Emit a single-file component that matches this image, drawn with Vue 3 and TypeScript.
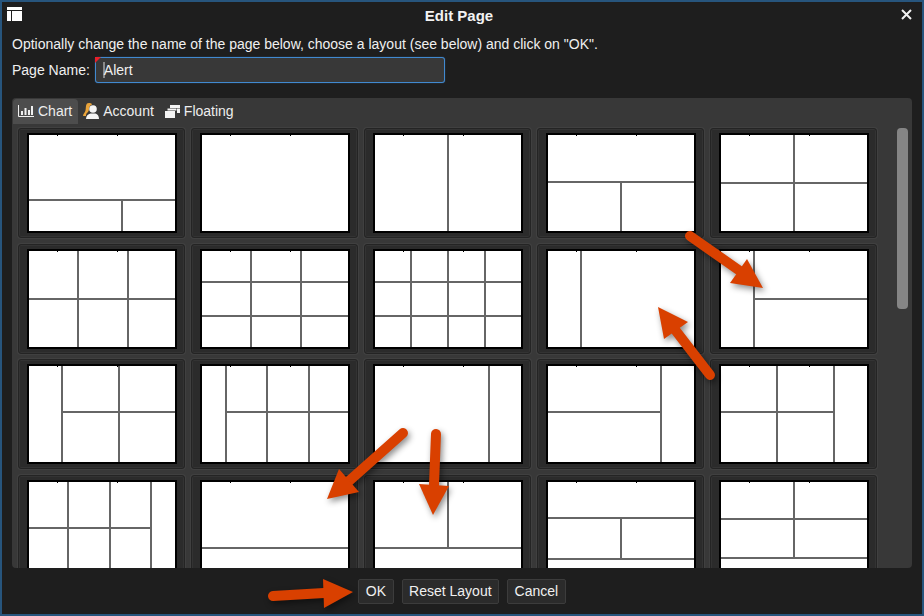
<script setup lang="ts">
type Line = [number, number, number, number]
const W = 150
const H = 100
const v = (x: number, a = 0, b = H + 1): Line => [x, a - 1, x, b - 1]
const h = (y: number, a = 0, b = W): Line => [a, y - 1, b, y - 1]

const layouts: Line[][] = [
  [h(68), v(95, 68)],
  [],
  [v(75)],
  [h(50), v(75, 50)],
  [v(75), h(51)],
  [v(51), v(101), h(51)],
  [v(51), v(101), h(34), h(68)],
  [v(38), v(75), v(112), h(34), h(68)],
  [v(35)],
  [v(35), h(51, 35)],
  [v(35), v(92), h(49, 35)],
  [v(26), v(67), v(109), h(49, 26)],
  [v(116)],
  [v(115), h(49, 0, 115)],
  [v(58), v(115), h(49, 0, 115)],
  [v(41), v(83), v(124), h(49, 0, 124)],
  [h(69)],
  [h(69), v(75, 0, 69)],
  [h(39), h(80), v(75, 39, 80)],
  [h(40), h(79), v(75, 0, 79)]
]

type Arrow = { shaft: string; head: string }
const arrows: Arrow[] = [
  { shaft: '690,236 740,271', head: '747,259 763,288 730,283' },
  { shaft: '710,375 676,331', head: '688,322 658,307 664,339' },
  { shaft: '403,433 349,481', head: '339,469 327,499 359,492' },
  { shaft: '436,434 434,485', head: '419,484 449,486 433,515' },
  { shaft: '273,596 324,593', head: '323,579 353,592 324,608' }
]
</script>

<template>
  <div class="window">
    <header class="titlebar">
      <svg class="app-icon" width="15" height="14" viewBox="0 0 15 14">
        <rect x="0" y="0" width="15" height="3" fill="#fff" />
        <rect x="0" y="4" width="4" height="10" fill="#fff" />
        <rect x="5" y="4" width="10" height="10" fill="#fff" />
      </svg>
      <span class="title">Edit Page</span>
      <svg class="close" width="11" height="11" viewBox="0 0 11 11">
        <path d="M1 1L10 10M10 1L1 10" stroke="#f2f2f2" stroke-width="2" />
      </svg>
    </header>

    <main class="body">
      <p class="intro">Optionally change the name of the page below, choose a layout (see below) and click on "OK".</p>
      <div class="name-row">
        <label class="name-label">Page Name:</label>
        <div class="name-input">
          <span class="caret"></span>
          <span>Alert</span>
          <span class="marker"></span>
        </div>
      </div>

      <section class="panel">
        <nav class="tabs">
          <div class="tab active">
            <svg width="16" height="12" viewBox="0 0 16 12">
              <path d="M0.500 0V11.500H16" fill="none" stroke="#f0f0f0" />
              <path d="M3 6h2v4H3zM6.500 3h2v7h-2zM10 5h2v5h-2zM13 1h2v9h-2z" fill="#f0f0f0" />
            </svg>
            <span>Chart</span>
          </div>
          <div class="tab">
            <svg width="16" height="16" viewBox="0 0 16 16">
              <path d="M4 0.500C6 -0.500 9 0 9 1.500C7 2.500 6 4 6 6C6 8 5 9 3.500 10.500C3 11.500 3 12.500 3 13H0C0 11 2 9.500 2.500 7.500C3 5 2.500 2 4 0.500Z" fill="#e8a33a" />
              <circle cx="10" cy="6" r="3.800" fill="#f4f4f4" />
              <path d="M3 16C3 13 5 11 7.500 10.500H12.500C14.500 11 16 13 16 16Z" fill="#f4f4f4" />
            </svg>
            <span>Account</span>
          </div>
          <div class="tab floating">
            <svg width="15" height="13" viewBox="0 0 15 13">
              <rect x="5" y="0" width="10" height="3" fill="#f4f4f4" />
              <rect x="2.500" y="3.500" width="9" height="2" fill="#f4f4f4" />
              <rect x="0" y="6" width="10" height="7" fill="#f4f4f4" />
              <rect x="12" y="3.500" width="3" height="4.500" fill="#f4f4f4" />
            </svg>
            <span>Floating</span>
          </div>
        </nav>

        <div class="content">
          <div class="grid">
            <div v-for="(lines, i) in layouts" :key="i" class="card">
              <svg class="thumb" :width="W" :height="H" :viewBox="`0 0 ${W} ${H}`">
                <rect x="0" y="0" :width="W" :height="H" fill="#fff" />
                <line
                  v-for="(l, j) in lines"
                  :key="j"
                  :x1="l[0]"
                  :y1="l[1]"
                  :x2="l[2]"
                  :y2="l[3]"
                  stroke="#666"
                  stroke-width="2"
                />
                <rect x="1" y="1" :width="W - 2" :height="H - 2" fill="none" stroke="#000" stroke-width="2" />
                <rect x="30" y="2" width="1" height="1" fill="#000" />
                <rect x="90" y="2" width="1" height="1" fill="#000" />
              </svg>
            </div>
          </div>
          <div class="scrollbar"></div>
        </div>
      </section>
    </main>

    <footer class="footer">
      <button class="btn">OK</button>
      <button class="btn">Reset Layout</button>
      <button class="btn">Cancel</button>
    </footer>

    <svg class="arrows" width="924" height="616" viewBox="0 0 924 616">
      <g v-for="(a, i) in arrows" :key="i">
        <polyline :points="a.shaft" fill="none" stroke="#d94000" stroke-width="10" stroke-linecap="round" />
        <polygon :points="a.head" fill="#d94000" />
      </g>
    </svg>
  </div>
</template>

<style>
html, body { margin: 0; background: #1e1e1e; }
</style>

<style scoped>
.window {
  position: relative;
  box-sizing: border-box;
  width: 924px;
  height: 616px;
  border: 2px solid #27557d;
  background: #1e1e1e;
  color: #f0f0f0;
  font-family: "Liberation Sans", Arial, sans-serif;
  font-size: 14px;
  display: flex;
  flex-direction: column;
  overflow: hidden;
}
.titlebar {
  flex: none;
  height: 26px;
  display: flex;
  align-items: center;
  justify-content: center;
  padding-right: 6px;
  position: relative;
}
.title { font-weight: 700; font-size: 15px; color: #f2f2f2; }
.app-icon { position: absolute; left: 5px; top: 5px; }
.close { position: absolute; right: 10px; top: 7px; }
.body {
  flex: 1;
  min-height: 0;
  display: flex;
  flex-direction: column;
  padding: 0 10px;
}
.intro { margin: 8px 0 0; line-height: 16px; height: 16px; }
.name-row {
  display: flex;
  align-items: center;
  gap: 5px;
  margin-top: 5px;
}
.name-input {
  position: relative;
  box-sizing: border-box;
  width: 350px;
  height: 26px;
  display: flex;
  align-items: center;
  padding-left: 7px;
  background: #383838;
  border: 1px solid #4189cf;
  border-radius: 3px;
  box-shadow: 0 0 1px #3b7fc4;
}
.caret { width: 2px; height: 16px; background: #8a8a8a; margin-right: -1px; }
.marker {
  position: absolute;
  left: -1px;
  top: -1px;
  border-top: 6px solid #e8202a;
  border-right: 6px solid transparent;
}
.panel {
  flex: 1;
  min-height: 0;
  margin-top: 15px;
  background: #383838;
  border-radius: 4px;
  overflow: hidden;
  display: flex;
  flex-direction: column;
}
.tabs {
  flex: none;
  height: 27px;
  display: flex;
  align-items: flex-start;
  padding: 1px 0 0 1px;
  box-sizing: border-box;
}
.tab {
  box-sizing: border-box;
  height: 25px;
  display: flex;
  align-items: center;
  gap: 4px;
  padding: 0 5px 1px;
  border-radius: 4px 4px 0 0;
  color: #eee;
}
.tab.active { background: #4d4d4d; padding-right: 6px; }
.tab.floating { padding-left: 6px; }
.content {
  flex: 1;
  min-height: 0;
  display: flex;
  align-items: flex-start;
  padding: 3px 0 0 6px;
}
.grid {
  flex: none;
  display: grid;
  grid-template-columns: repeat(5, 167px);
  grid-auto-rows: 110px;
  gap: 5.5px 6px;
}
.card {
  box-sizing: border-box;
  display: flex;
  align-items: center;
  justify-content: flex-start;
  padding-left: 8px;
  background: #2b2b2b;
  border: 1px solid #242424;
  border-radius: 3px;
  box-shadow: inset 0 0 0 1px #333, 0 0 0 1px #404040;
}
.thumb { display: block; }
.scrollbar {
  flex: none;
  width: 11px;
  height: 181px;
  margin-left: 20px;
  background: #858585;
  border-radius: 4px;
}
.footer {
  flex: none;
  height: 46px;
  display: flex;
  align-items: center;
  justify-content: center;
  gap: 8px;
}
.btn {
  box-sizing: border-box;
  height: 25px;
  padding: 0 6.5px;
  background: #2b2b2b;
  border: 1px solid #3c3c3c;
  border-radius: 2px;
  color: #f0f0f0;
  font: 14px "Liberation Sans", Arial, sans-serif;
}
.arrows {
  position: absolute;
  left: -2px;
  top: -2px;
  pointer-events: none;
  filter: drop-shadow(2px 3px 3px rgba(0, 0, 0, 0.45));
}
</style>
